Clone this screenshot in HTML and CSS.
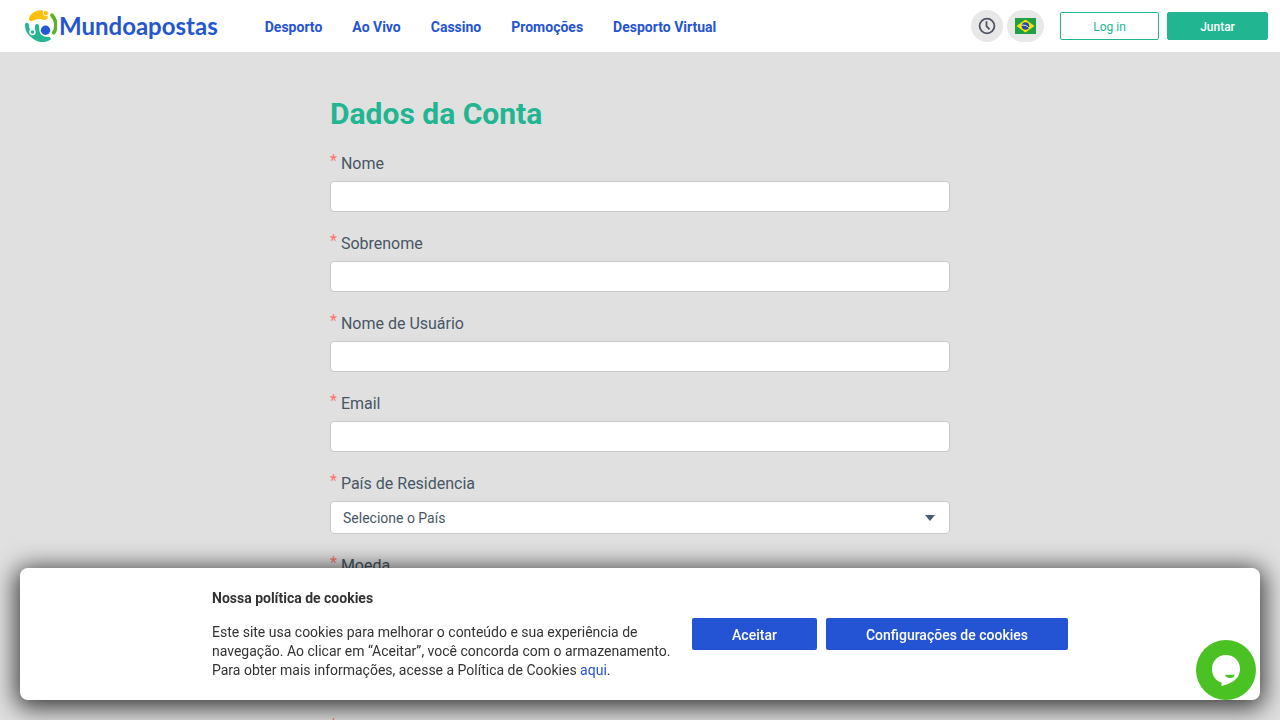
FILE: index.html
```html
<!DOCTYPE html>
<html lang="pt-BR">
<head>
<meta charset="utf-8">
<meta name="viewport" content="width=device-width, initial-scale=1">
<title>Mundoapostas</title>
<link rel="stylesheet" href="styles.css">
</head>
<body>
<header class="header">
  <a class="logo" href="#">
    <svg class="logo-mark" viewBox="0 0 32 32" aria-hidden="true">
      <path d="M4 8C6 2.500 12-.5 17 .3c2 .5 1.500 2.700 3 3.700 2 1.300 3.300 2 2.500 4-1 2.500-3.500 2-5.500 1.500C12 8 9.500 10.500 6.500 11 4.500 11.200 3.500 9.800 4 8z" fill="#fbbf0b"/>
      <circle cx="20.800" cy="3.200" r="2.600" fill="#fbbf0b" stroke="#fff" stroke-width=".8"/>
      <path d="M27 5.200c4.500 5 5 12.500 1.800 17.500" fill="none" stroke="#58b526" stroke-width="3.600" stroke-linecap="round"/>
      <path d="M0 15c0-3 3.600-3 4 0 .2 2.500.7 5 2.200 6.500C8 23 9.500 22 9.800 19c0-2.500.2-5 2.200-5s2.200 2 2.200 4c0 6 3 8.800 8.300 8.800 2.500 0 4.500 1.700 2.500 3.200-6 4-14.500 2-19-3C1.500 23.500 0 19 0 15z" fill="#25b592"/>
      <circle cx="7.500" cy="22" r="2.500" fill="#25b592" stroke="#fff" stroke-width="1.400"/>
      <circle cx="20.500" cy="20.300" r="4.700" fill="#2456d6"/>
    </svg>
    <span class="logo-text">Mundoapostas</span>
  </a>
  <nav class="nav">
    <a href="#">Desporto</a>
    <a href="#">Ao Vivo</a>
    <a href="#">Cassino</a>
    <a href="#">Promoções</a>
    <a href="#">Desporto Virtual</a>
  </nav>
  <div class="tools">
    <button class="round" type="button" aria-label="Hora">
      <svg width="18" height="18" viewBox="0 0 18 18" fill="none" stroke="#505565" stroke-width="1.800" aria-hidden="true"><circle cx="9" cy="9" r="7.400"/><path d="M8.500 4.300v4.900l3 3.200"/></svg>
    </button>
    <button class="round round-flag" type="button" aria-label="Idioma">
      <svg width="21" height="16" viewBox="0 0 21 16" aria-hidden="true"><path fill="#229e45" d="M0 0h21v16H0z"/><path fill="#f8e509" d="M10.500 1.500L19.500 8l-9 6.500L1.500 8z"/><circle cx="10.500" cy="8" r="3.800" fill="#2b49a3"/><path d="M7 7.200c2.500-.4 5 .5 6.700 2.500" fill="none" stroke="#fff" stroke-width=".9"/></svg>
    </button>
  </div>
  <div class="account">
    <button class="btn btn-login" type="button">Log in</button>
    <button class="btn btn-join" type="button">Juntar</button>
  </div>
</header>
<main class="page">
  <form class="form">
    <h1>Dados da Conta</h1>
    <div class="field"><label for="nome"><span class="req">*</span>Nome</label><input id="nome" type="text"></div>
    <div class="field"><label for="sobrenome"><span class="req">*</span>Sobrenome</label><input id="sobrenome" type="text"></div>
    <div class="field"><label for="usuario"><span class="req">*</span>Nome de Usuário</label><input id="usuario" type="text"></div>
    <div class="field"><label for="email"><span class="req">*</span>Email</label><input id="email" type="email"></div>
    <div class="field"><label for="pais"><span class="req">*</span>País de Residencia</label><select id="pais"><option>Selecione o País</option></select></div>
    <div class="field"><label for="moeda"><span class="req">*</span>Moeda</label><select id="moeda"><option></option></select></div>
    <div class="field"><label for="celular"><span class="req">*</span></label><input id="celular" type="text"></div>
    <div class="field"><label for="senha"><span class="req">*</span></label><input id="senha" type="password"></div>
  </form>
</main>
<section class="cookies" aria-labelledby="cookies-title">
  <div class="cookies-inner">
    <div class="cookies-text">
      <h2 id="cookies-title">Nossa política de cookies</h2>
      <p>Este site usa cookies para melhorar o conteúdo e sua experiência de navegação. Ao clicar em “Aceitar”, você concorda com o armazenamento. Para obter mais informações, acesse a Política de Cookies <a href="#">aqui</a>.</p>
    </div>
    <div class="cookies-actions">
      <button type="button">Aceitar</button>
      <button type="button">Configurações de cookies</button>
    </div>
  </div>
</section>
<button class="chat" type="button" aria-label="Chat">
  <svg width="60" height="60" viewBox="0 0 60 60" aria-hidden="true"><path fill="#fff" d="M30 15c8 0 14 6 14 13.700 0 6.300-3 10.300-8 13.300-3.500 2-7 3-10.500 4V42.500C20 41 16 36 16 29c0-8 6-14 14-14z"/><path fill="#4bc224" d="M29 34.800h9.500c0 4.300-8.500 4.300-9.500 0z"/></svg>
</button>
</body>
</html>
```
FILE: styles.css
```css
* { box-sizing: border-box; }
body {
  margin: 0;
  height: 100vh;
  display: flex;
  flex-direction: column;
  overflow: hidden;
  background: #e0e0e0;
  color: #475765;
  font-family: Roboto, "Liberation Sans", sans-serif;
  font-size: 14px;
}
button, input, select { font: inherit; }
button { cursor: pointer; border: 0; padding: 0; }
a { text-decoration: none; }
.header {
  flex: none;
  display: flex;
  align-items: center;
  height: 52px;
  padding: 0 12px 0 25px;
  background: #fff;
}
.logo { display: flex; align-items: center; gap: 2px; color: #2456d0; }
.logo-mark { width: 32px; height: 32px; }
.logo-text { font: 700 24px/32px Lato, sans-serif; }
.nav { display: flex; gap: 30px; margin-left: 47px; padding-top: 2px; }
.nav a { color: #2453d3; font-weight: 700; line-height: 20px; white-space: nowrap; }
.tools { display: flex; gap: 4px; margin-left: auto; }
.round {
  display: flex;
  align-items: center;
  justify-content: center;
  width: 32px;
  height: 32px;
  border-radius: 16px;
  background: #e8e8e9;
}
.round-flag { width: 37px; }
.account { display: flex; gap: 8px; margin-left: 16px; }
.btn { height: 28px; padding-top: 1px; border: 1px solid #21b592; border-radius: 2px; font-size: 12px; }
.btn-login { width: 99px; background: #fff; color: #21b592; }
.btn-join { width: 101px; background: #21b592; color: #fff; font-weight: 500; }
.page { flex: 1; min-height: 0; overflow-y: auto; scrollbar-width: none; padding: 41px 20px; }
.form { max-width: 620px; margin: 0 auto; }
h1 { margin: 0 0 19px; color: #21b592; font-size: 30px; line-height: 42px; font-weight: 700; }
.field { margin-bottom: 22px; }
.field label { display: flex; gap: 4px; height: 20px; margin-bottom: 7px; font-size: 16px; line-height: 20px; }
.req { color: #ff7468; line-height: 14px; }
.field input, .field select {
  display: block;
  width: 100%;
  height: 31px;
  border: 1px solid #c7c8ca;
  border-radius: 4px;
  background: #fff;
  padding: 0 12px;
  color: #475765;
}
.field select {
  height: 33px;
  appearance: none;
  background: #fff url("data:image/svg+xml,%3Csvg xmlns='http://www.w3.org/2000/svg' width='10' height='6'%3E%3Cpath d='M0 0h10L5 6z' fill='%23475c70'/%3E%3C/svg%3E") no-repeat right 14px center;
}
.cookies {
  position: fixed;
  right: 20px;
  bottom: 20px;
  left: 20px;
  padding: 20px;
  border-radius: 8px;
  background: #fff;
  box-shadow: 0 4px 24px 4px rgba(0, 0, 0, .75);
  color: #333;
}
.cookies-inner { display: flex; align-items: center; gap: 14px; max-width: 856px; margin: 0 auto; }
.cookies-text { flex: 1; }
.cookies h2 { margin: 0 0 15px; font-size: 14px; line-height: 20px; font-weight: 700; }
.cookies p { margin: 0; line-height: 19px; }
.cookies a { color: #2453d3; }
.cookies-actions { display: flex; gap: 9px; }
.cookies-actions button {
  height: 32px;
  padding: 1px 40px 0;
  border-radius: 2px;
  background: #2453d3;
  color: #fff;
  font-weight: 500;
  white-space: nowrap;
}
.chat {
  position: fixed;
  right: 24px;
  bottom: 20px;
  width: 60px;
  height: 60px;
  border-radius: 50%;
  background: #4bc224;
}
.chat svg { display: block; }
```
